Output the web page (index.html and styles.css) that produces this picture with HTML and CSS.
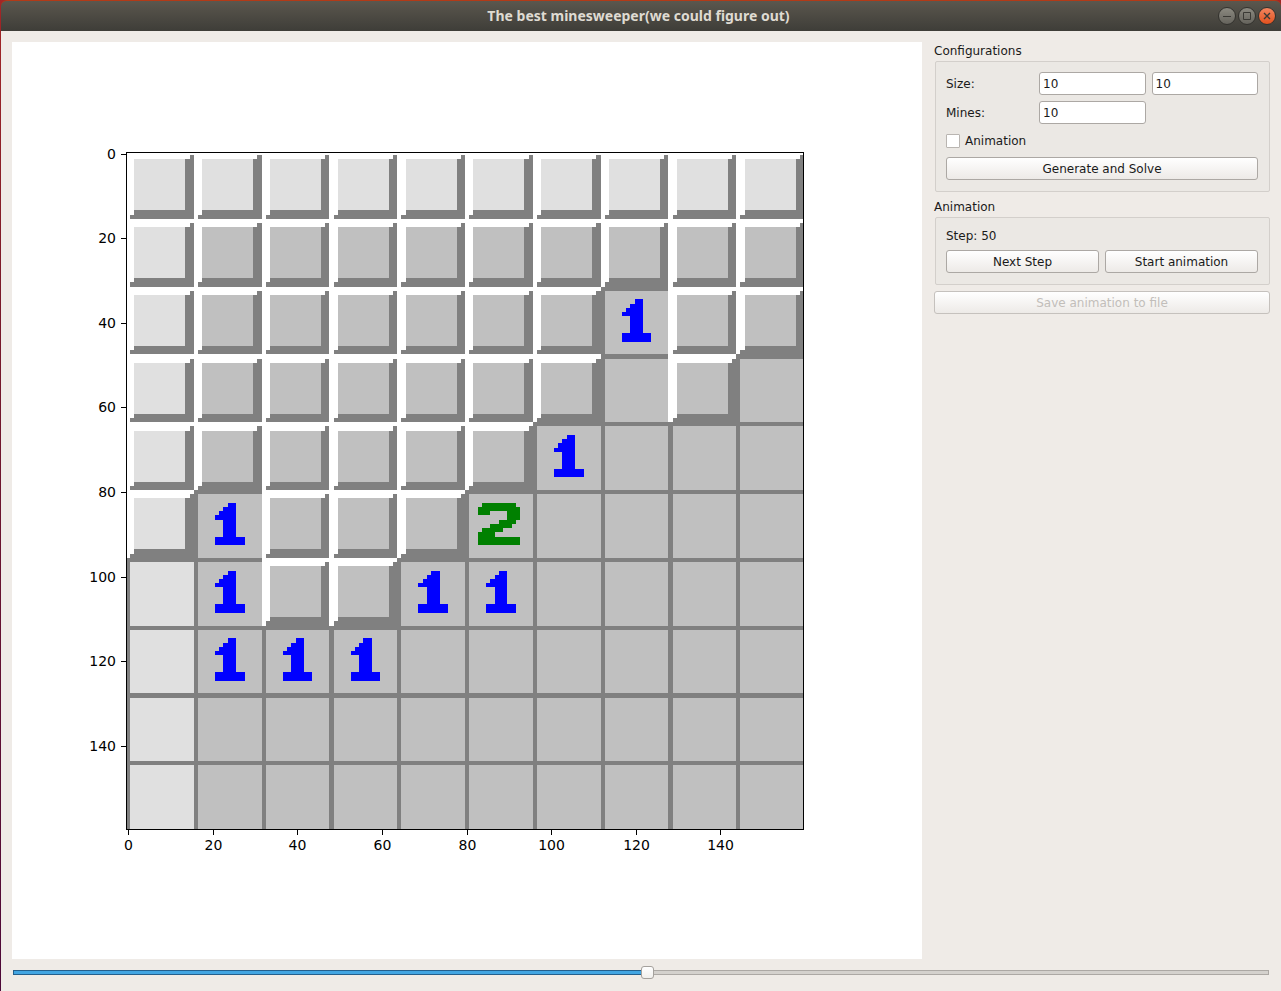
FILE: index.html
```html
<!DOCTYPE html>
<html lang="en">
<head>
<meta charset="utf-8">
<title>The best minesweeper(we could figure out)</title>
<link rel="stylesheet" href="styles.css">
</head>
<body>
<div class="window">
  <header class="titlebar">
    <h1 class="title">The best minesweeper(we could figure out)</h1>
    <div class="window-buttons">
      <button class="window-button" aria-label="Minimize"><svg viewBox="0 0 18 18"><path d="M5 9.500h8"/></svg></button>
      <button class="window-button" aria-label="Maximize"><svg viewBox="0 0 18 18"><path d="M5.500 5.500h7v7h-7z"/></svg></button>
      <button class="window-button close" aria-label="Close"><svg viewBox="0 0 18 18"><path d="M6 6l6 6M12 6l-6 6"/></svg></button>
    </div>
  </header>
  <main class="content">
    <section class="figure">
      <svg class="plot" viewBox="0 0 910 917" role="img" aria-label="Minesweeper board">
        <defs>
          <clipPath id="axes"><rect x="115" y="111" width="676" height="676"/></clipPath>
          <path id="bevel" d="M15 1h1v15H1v-1h1v-1h12V2h1z"/>
          <path id="digit-1" class="one" d="M8 3h2v8h2v2H5v-2h2V7H5V6h1V5h1V4h1z"/>
          <path id="digit-2" class="two" d="M4 3h8v1h1v3h-1v1h-1v1H9v1H7v1h6v2H3v-2h0v-1h1V9h2V8h2V7h2V5H6v1H3V4h1z"/>
        </defs>
        <g clip-path="url(#axes)"><g id="board" class="board" transform="translate(114 109) scale(4.2375)"></g></g>
        <rect class="axis" x="114.500" y="110.500" width="677" height="677"/>
        <g id="ticks"></g>
      </svg>
    </section>
    <aside class="sidebar">
      <fieldset class="group">
        <legend class="group-title">Configurations</legend>
        <div class="group-box">
          <div class="form">
            <label for="size-x">Size:</label>
            <input class="field" id="size-x" type="text" value="10">
            <input class="field" type="text" value="10" aria-label="Size, second dimension">
            <label for="mines">Mines:</label>
            <input class="field" id="mines" type="text" value="10">
          </div>
          <label class="check"><input type="checkbox">Animation</label>
          <button class="button">Generate and Solve</button>
        </div>
      </fieldset>
      <fieldset class="group">
        <legend class="group-title">Animation</legend>
        <div class="group-box steps">
          <p class="step">Step: 50</p>
          <div class="button-row">
            <button class="button">Next Step</button>
            <button class="button">Start animation</button>
          </div>
        </div>
      </fieldset>
      <button class="button" disabled>Save animation to file</button>
    </aside>
  </main>
  <footer class="timeline">
    <input class="slider" type="range" min="0" max="99" value="50" aria-label="Animation step">
  </footer>
</div>
<script src="board.js"></script>
</body>
</html>
```

FILE: styles.css
```css
* { box-sizing: border-box; }

body {
  margin: 0;
  background: linear-gradient(#a32626, #5e0b38);
  color: #1a1a1a;
  font: 12px/16px "DejaVu Sans", sans-serif;
}

.window {
  display: flex;
  flex-direction: column;
  min-height: 100vh;
  border-left: 1px solid #5c0a3a;
  border-image: linear-gradient(#a32626, #7a1a2a 30%, #4d0838) 1;
}

.titlebar {
  display: grid;
  grid-template-columns: 1fr auto 1fr;
  align-items: center;
  height: 31px;
  padding-right: 5px;
  border-top: 1px solid #b33a17;
  border-radius: 6px 6px 0 0;
  background: linear-gradient(#5b574e, #3e3d38);
}

.title {
  grid-column: 2;
  margin: 0;
  color: #dfdbd2;
  font: bold 14px/20px "Noto Sans", sans-serif;
}

.window-buttons {
  display: flex;
  justify-content: flex-end;
  gap: 2px;
}

.window-button {
  width: 18px;
  height: 18px;
  padding: 0;
  border: 1px solid #33322e;
  border-radius: 50%;
  background: linear-gradient(#8b8980, #65635c);
}

.window-button svg {
  display: block;
  width: 18px;
  height: 18px;
  margin: -1px;
  fill: none;
  stroke: #3a3934;
}

.window-button.close { background: linear-gradient(#f4855f, #e2511e); }
.window-button.close svg { stroke-width: 1.4; }

.content {
  display: grid;
  flex: 1;
  grid-template-columns: minmax(0, 1fr) 336px;
  gap: 12px;
  padding: 11px 11px 0;
  background: #efebe7;
}

.figure {
  display: flex;
  background: #fff;
}

.plot {
  display: block;
  width: 100%;
  font-size: 14px;
}

.board { shape-rendering: crispEdges; }
.high { fill: #fff; }
.shade { fill: #808080; }
.face { fill: #c0c0c0; }
.face.light { fill: #e0e0e0; }
.one { fill: #00f; }
.two { fill: #008000; }
.axis { fill: none; stroke: #000; }
.tick-x { text-anchor: middle; }
.tick-y { text-anchor: end; }

.sidebar {
  display: flex;
  flex-direction: column;
  gap: 6px;
}

.group {
  min-width: 0;
  margin: 0;
  padding: 0;
  border: 0;
}

.group-title {
  padding: 1px 0 2px;
}

.group-box {
  display: flex;
  flex-direction: column;
  gap: 8px;
  margin-left: 1px;
  padding: 10px 11px 11px 10px;
  border: 1px solid #d3cfcb;
  border-radius: 2px;
  background: #ebe8e4;
}

.group-box.steps { gap: 6px; }

.form {
  display: grid;
  grid-template-columns: 87px 1fr 1fr;
  gap: 6px;
  align-items: center;
}

.field {
  width: 100%;
  height: 23px;
  padding: 0 3px;
  border: 1px solid #aca8a4;
  border-radius: 3px;
  background: #fff;
  color: inherit;
  font: inherit;
}

.check {
  display: flex;
  gap: 5px;
  align-items: center;
  min-height: 17px;
}

.check input {
  appearance: none;
  width: 14px;
  height: 14px;
  margin: 0;
  border: 1px solid #b9b5b1;
  border-radius: 1px;
  background: #fff;
}

.check input:checked { background: #3f9ddd; }

.button {
  flex: 1;
  min-height: 23px;
  padding: 0 8px;
  border: 1px solid #aca8a4;
  border-radius: 3px;
  background: linear-gradient(#fff, #edeae7);
  color: inherit;
  font: inherit;
}

.sidebar > .button,
.group-box > .button { flex: none; }

.button:disabled {
  border-color: #c5c1bd;
  color: #c2beba;
}

.step { margin: 0; }

.button-row {
  display: flex;
  gap: 6px;
}

.button-row .button { flex-basis: 0; }

.timeline {
  display: flex;
  align-items: center;
  height: 32px;
  padding: 0 12px 6px;
  background: #efebe7;
}

.slider {
  appearance: none;
  width: 100%;
  height: 14px;
  margin: 0;
  background: transparent;
}

.slider::-webkit-slider-runnable-track {
  height: 5px;
  border: 1px solid #aca8a4;
  background: linear-gradient(90deg, #42a5e2 50%, #d4d1cd 50%);
  border-image: linear-gradient(90deg, #245f8c 50%, #aca8a4 50%) 1;
}

.slider::-webkit-slider-thumb {
  appearance: none;
  width: 13px;
  height: 13px;
  margin-top: -5px;
  border: 1px solid #a5a19d;
  border-radius: 3px;
  background: linear-gradient(#fff, #f1efed);
}
```

FILE: board.js
```js
// '#' is a covered cell, '.' an open one, a digit its count of mines.
const cells = [
  "##########",
  "##########",
  "#######1##",
  "#######.#.",
  "######1...",
  "#1###2....",
  ".1##11....",
  ".111......",
  "..........",
  ".........."
];

let board = "";
cells.forEach((row, r) => [...row].forEach((cell, c) => {
  const face = r === 0 || c === 0 ? "face light" : "face";
  board += `<g transform="translate(${c * 16} ${r * 16})">`;
  if (cell === "#") {
    board += `<rect class="high" width="16" height="16"/><use href="#bevel" class="shade"/><rect class="${face}" x="2" y="2" width="12" height="12"/>`;
  } else {
    board += `<rect class="shade" width="16" height="16"/><rect class="${face}" x="1" y="1" width="15" height="15"/>`;
    if (cell !== ".") board += `<use href="#digit-${cell}"/>`;
  }
  board += "</g>";
}));
document.getElementById("board").innerHTML = board;

let ticks = "";
for (let v = 0; v <= 140; v += 20) {
  const x = Math.floor(116.6 + v * 4.23) + 0.5;
  const y = Math.floor(112 + v * 4.23) + 0.5;
  ticks += `<path class="axis" d="M${x} 788v5M114 ${y}h-5"/>`;
  ticks += `<text class="tick-x" x="${x}" y="808">${v}</text>`;
  ticks += `<text class="tick-y" x="104" y="${y + 4.5}">${v}</text>`;
}
document.getElementById("ticks").innerHTML = ticks;
```
